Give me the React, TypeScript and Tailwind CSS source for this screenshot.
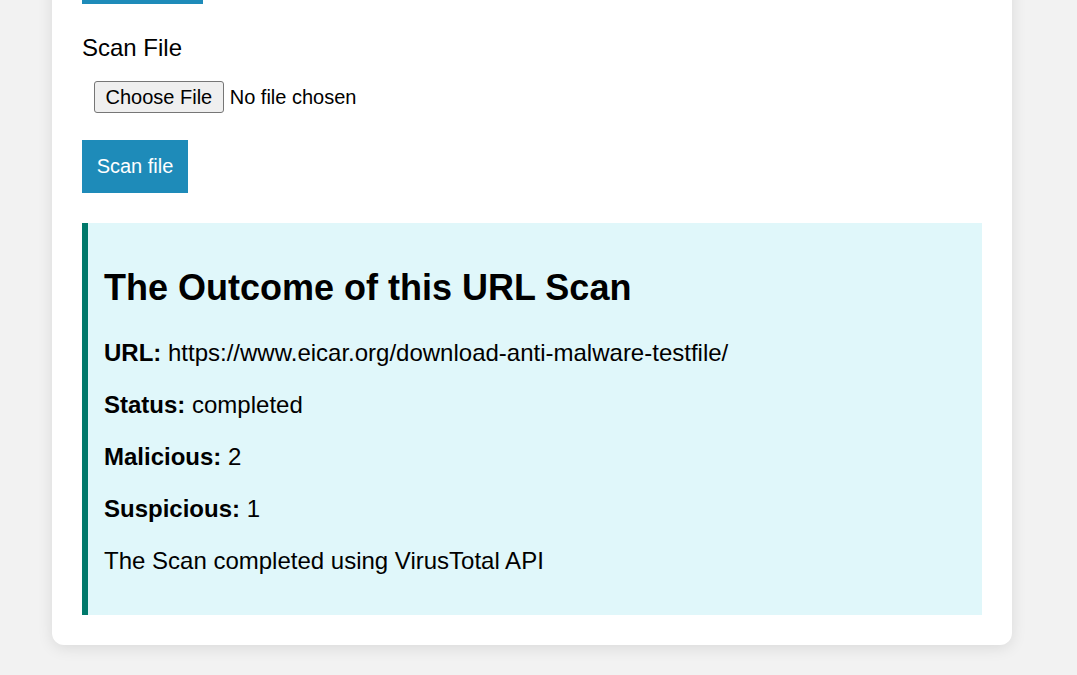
import { useState } from 'react';

type Result = {
  url: string;
  status: string;
  malicious: number;
  suspicious: number;
};

const result: Result = {
  url: 'https://www.eicar.org/download-anti-malware-testfile/',
  status: 'completed',
  malicious: 2,
  suspicious: 1,
};

export default function App() {
  const [file, setFile] = useState<File | null>(null);

  return (
    <div className="min-h-screen bg-[#f2f2f2] font-['Liberation_Sans',Arial,sans-serif] text-black overflow-hidden">
      {/* page is shown scrolled down, so the top of the card sits above the viewport */}
      <div className="w-[960px] ml-[52px] -mt-[79px] mb-[30px] bg-white rounded-b-[12px] shadow-[0_3px_15px_rgba(0,0,0,0.1)] p-[30px]">
        <button type="button" className="block h-[53px] w-[121px] bg-[#1e8bb9] text-white text-[20px]">
          Scan URL
        </button>

        <label className="block mt-[30px] text-[24px] leading-[27.6px]" htmlFor="file">
          Scan File
        </label>
        <input
          id="file"
          type="file"
          onChange={(e) => setFile(e.target.files?.[0] ?? null)}
          className="block ml-3 mt-[19px] text-[20px] leading-[22px] file:border file:border-solid file:border-[#767676] file:rounded-[3px] file:bg-[#efefef] file:px-[10.5px] file:py-[4px] file:mr-[6px] file:text-black"
        />

        <button
          type="button"
          data-has-file={file ? 'yes' : 'no'}
          className="block mt-[27px] h-[53px] w-[106px] bg-[#1e8bb9] text-white text-[20px]"
        >
          Scan file
        </button>

        <div className="mt-[30px] bg-[#e0f7fa] border-l-[6px] border-[#00796b] px-4 pt-4 pb-[40px]">
          <h2 className="mt-[28px] mb-[31px] text-[36px] leading-[41.4px] font-bold">The Outcome of this URL Scan</h2>
          <div className="flex flex-col gap-[24px] text-[24px] leading-[28px]">
            <p>
              <strong>URL:</strong> {result.url}
            </p>
            <p>
              <strong>Status:</strong> {result.status}
            </p>
            <p>
              <strong>Malicious:</strong> {result.malicious}
            </p>
            <p>
              <strong>Suspicious:</strong> {result.suspicious}
            </p>
            <p>The Scan completed using VirusTotal API</p>
          </div>
        </div>
      </div>
    </div>
  );
}
